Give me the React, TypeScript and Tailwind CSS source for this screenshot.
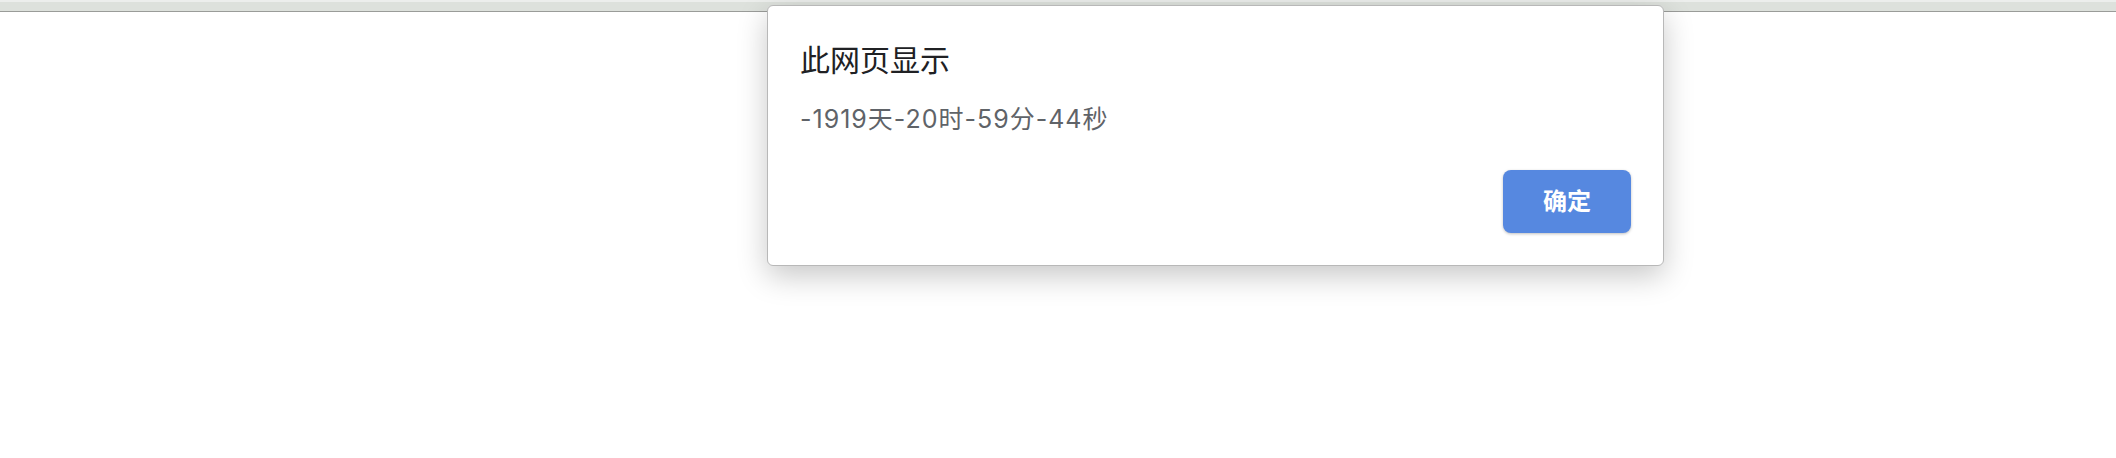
export default function App() {
  return (
    <div
      className="relative w-[2116px] h-[458px] bg-white overflow-hidden"
      style={{ fontFamily: '"Liberation Sans", "Noto Sans CJK SC", sans-serif' }}
    >
      {/* browser strip */}
      <div className="h-[12px] bg-[#dde1dc] border-t-[2px] border-t-[#eceeec] border-b border-b-[#9a9c99]" />

      {/* alert dialog */}
      <div className="absolute left-[767px] top-[5px] w-[897px] h-[261px] bg-white rounded-[6px] border border-[#b8b8b8] shadow-[0_10px_30px_rgba(0,0,0,0.22)] flex flex-col px-8 pt-[37px] pb-8">
        <div className="text-[30px] leading-[36px] text-[#202124]">此网页显示</div>
        <div className="mt-[25px] text-[25px] leading-[30px] tracking-[1px] text-[#5f6368] font-['Inter','Noto_Sans_CJK_SC',sans-serif]">
          -1919天-20时-59分-44秒
        </div>
        <div className="mt-auto flex justify-end">
          <button className="w-[128px] h-[63px] rounded-[8px] bg-[#5688e0] text-white text-[24px] font-bold shadow-[0_1px_3px_rgba(0,0,0,0.25)]">
            确定
          </button>
        </div>
      </div>
    </div>
  );
}
